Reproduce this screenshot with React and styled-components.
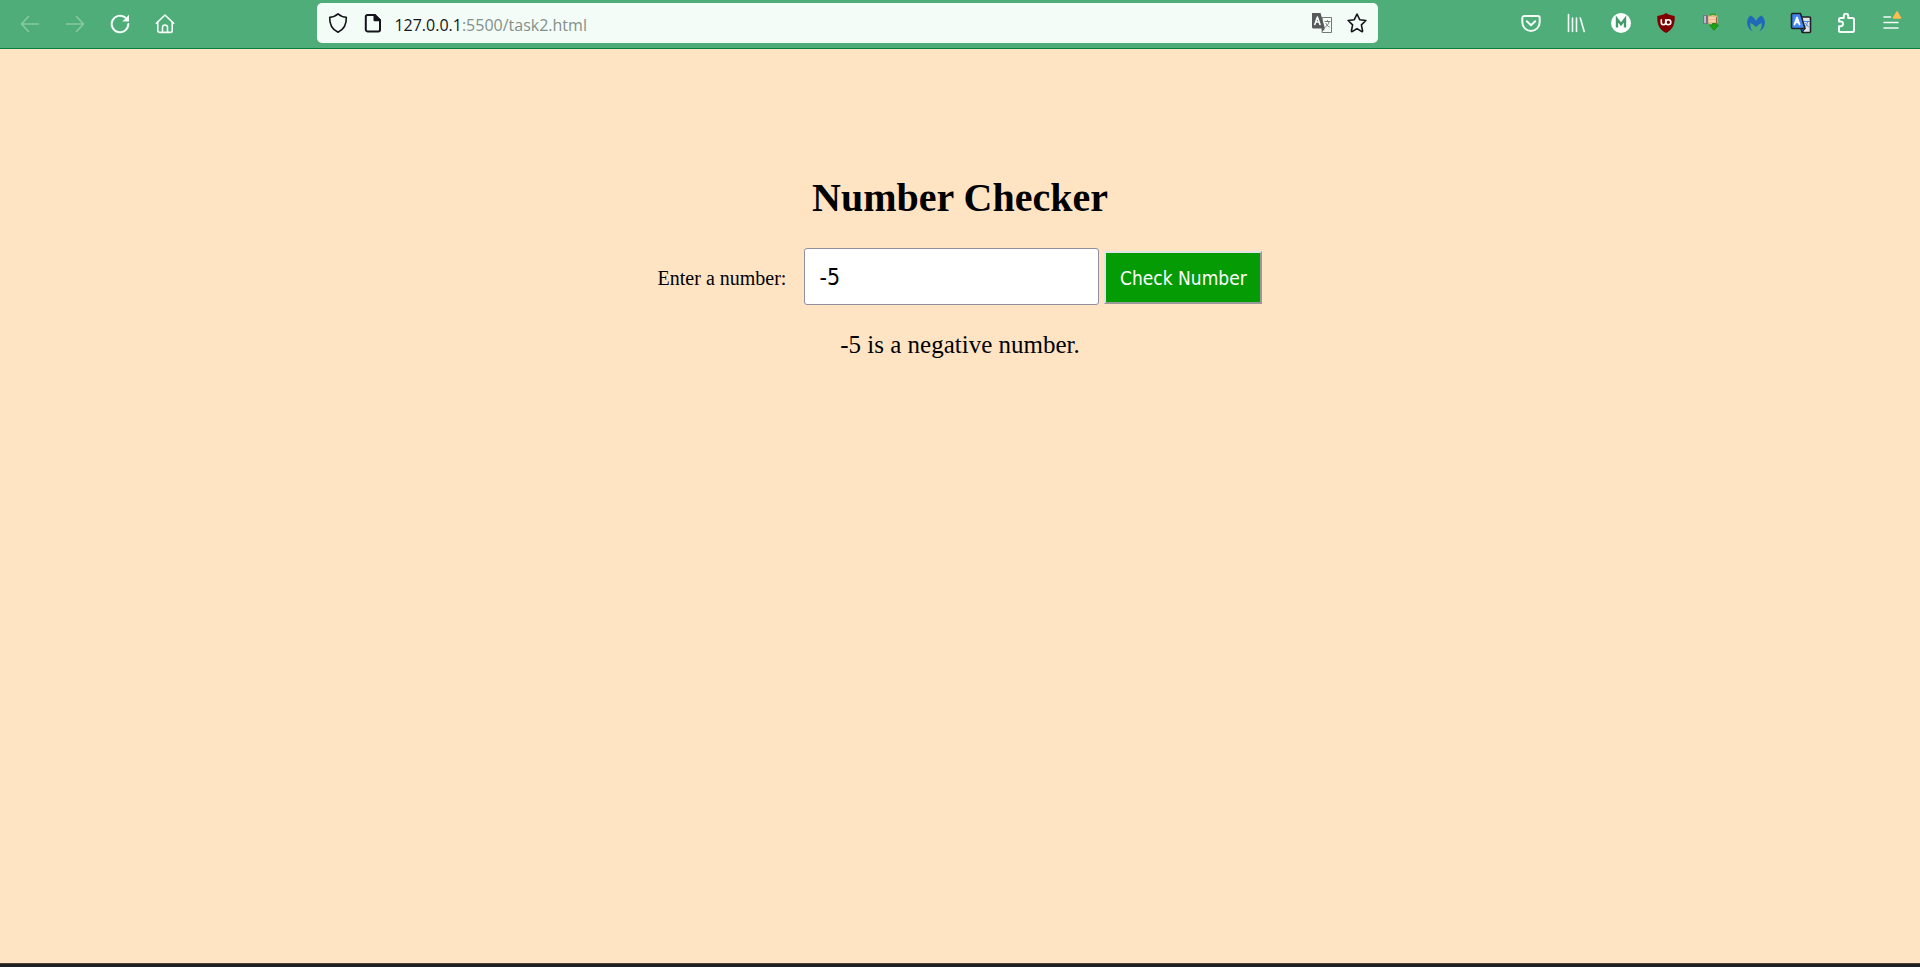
import React, { useState } from "react";
import styled, { createGlobalStyle } from "styled-components";

const GlobalStyle = createGlobalStyle`
  * { box-sizing: border-box; }
  body { margin: 0; }
`;

const Window = styled.div`
  display: flex;
  flex-direction: column;
  min-height: 100vh;
  background: #ffe4c4;
`;

const Toolbar = styled.header`
  display: flex;
  align-items: center;
  padding: 3px 7px 5px;
  background: #4fad79;
  border-bottom: 1px solid #0a8040;
`;

const ButtonGroup = styled.nav`
  display: flex;
  flex: none;
`;

const Spring = styled.div`
  flex: 131 1 0;
`;

const ToolButton = styled.button`
  display: flex;
  align-items: center;
  justify-content: center;
  width: 45px;
  height: 40px;
  padding: ${(p) => (p.$low ? "2px 0 0" : "0")};
  border: 0;
  background: none;
  color: #f3fcf7;
  opacity: ${(p) => (p.disabled ? 0.35 : 1)};
`;

const AddressBar = styled.div`
  display: flex;
  align-items: center;
  flex: 1059 1 0;
  height: 40px;
  padding: 0 3px;
  border-radius: 5px;
  background: #f3fcf7;
`;

const AddressButton = styled(ToolButton)`
  flex: none;
  width: 35px;
  color: #15141a;
`;

const Address = styled.a`
  flex: 1;
  padding: 4px 0 0 4px;
  font: 16px/24px "Open Sans", sans-serif;
  color: #84908a;
  text-decoration: none;
`;

const Host = styled.span`
  color: #15141a;
`;

const Icon = styled.svg.attrs({ width: 24, height: 24, viewBox: "0 0 24 24", "aria-hidden": true })`
  display: block;
  fill: none;
  stroke: currentColor;
  stroke-width: ${(p) => (p.$bold ? 2 : 1.6)};
  stroke-linecap: round;
  stroke-linejoin: round;
`;

const Page = styled.main`
  flex: 1;
  padding: 126px 16px 32px;
  font-family: "Liberation Serif", serif;
  color: #000;
  text-align: center;
`;

const Title = styled.h1`
  margin: 0 0 27px;
  font-size: 40px;
  line-height: 46px;
`;

const Form = styled.form`
  display: flex;
  align-items: baseline;
  justify-content: center;
`;

const Label = styled.label`
  margin-right: 18px;
  font-size: 20px;
`;

const NumberInput = styled.input`
  width: 295px;
  height: 57px;
  margin-right: 5px;
  padding: 0 14px;
  border: 1px solid #8f8f9d;
  border-radius: 3px;
  outline: 0;
  background: #fff;
  color: #000;
  font: 23px "DejaVu Sans Condensed", "DejaVu Sans", sans-serif;
  font-stretch: condensed;
`;

const CheckButton = styled.button`
  width: 158px;
  height: 53px;
  padding: 0;
  border: 2px solid;
  border-color: #e3e3e3 #999 #999 #e3e3e3;
  background: #059b05;
  color: #fff;
  font: 19px "DejaVu Sans Condensed", "DejaVu Sans", sans-serif;
  white-space: nowrap;
`;

const Result = styled.p`
  margin: 25px 0 0;
  font-size: 25px;
  line-height: 29px;
`;

const BottomEdge = styled.footer`
  height: 4px;
  background: #202024;
  border-top: 1px solid #4a4238;
`;

const BackIcon = () => (
  <Icon><path d="M20.5 12H3.500M10.500 4.500L3.500 12l7 7.500" /></Icon>
);
const ForwardIcon = () => (
  <Icon><path d="M3.500 12h17M13.500 4.500l7 7.500-7 7.500" /></Icon>
);
const ReloadIcon = () => (
  <Icon $bold>
    <path d="M20.300 12a8.300 8.300 0 1 1-3-6.400" />
    <path d="M21 2.800v6.700h-6.700z" fill="currentColor" stroke="none" />
  </Icon>
);
const HomeIcon = () => (
  <Icon>
    <path d="M3.300 11.300L12 3l8.700 8.300" />
    <path d="M4.800 10v8.700a1.700 1.700 0 0 0 1.700 1.700h11a1.700 1.700 0 0 0 1.700-1.700V10" />
    <path d="M9.500 20v-4.500a2.500 2.500 0 0 1 5 0V20" />
  </Icon>
);
const ShieldIcon = () => (
  <Icon><path d="M12 2.800c2.500 2.300 5.300 3.300 8.300 3.500.3 6.700-2 12-8.300 15-6.300-3-8.600-8.300-8.300-15 3-.2 5.800-1.200 8.300-3.500z" /></Icon>
);
const FileIcon = () => (
  <Icon $bold>
    <path d="M6.500 4h7.300l5.200 5.200v9.500a1.700 1.700 0 0 1-1.700 1.700H6.500a1.700 1.700 0 0 1-1.700-1.700v-13A1.700 1.700 0 0 1 6.500 4z" />
    <path d="M13.500 4v5.300H19z" fill="currentColor" />
  </Icon>
);
const PageTranslateIcon = () => (
  <Icon>
    <path d="M12.500 6.500h9v15h-9z" fill="#f3fcf7" stroke="#777" strokeWidth="1" />
    <path d="M2 2h8.500l4.500 15.500H3.500A1.500 1.500 0 0 1 2 16z" fill="#56585a" stroke="none" />
    <path d="M12 17.500h3l-2.500 3z" fill="#444" stroke="none" />
    <path d="M4.800 13.500l2.600-7.500 2.600 7.500M5.700 11h3.500" stroke="#f3fcf7" />
    <path d="M15 10.500h5M17.500 9.500v1M19 11c-.6 2.300-1.800 3.800-3.500 5M16 12.500c.6 1.600 1.700 2.700 3.300 3.500" stroke="#777" strokeWidth="1" />
  </Icon>
);
const StarIcon = () => (
  <Icon><path d="M12 3l2.700 5.700 6.200.8-4.500 4.300 1.200 6.200c.1.500-.4.800-.8.600L12 17.600l-4.800 3c-.4.200-.9-.1-.8-.6l1.200-6.200-4.500-4.300 6.200-.8z" /></Icon>
);
const PocketIcon = () => (
  <Icon $bold>
    <path d="M5.300 5h13.400a2 2 0 0 1 2 2v4.200a8.700 8.700 0 0 1-17.400 0V7a2 2 0 0 1 2-2z" />
    <path d="M7.800 10.200l4.200 4 4.200-4" />
  </Icon>
);
const LibraryIcon = () => (
  <Icon><path d="M4.500 3.500v17M8.500 7v13.500M12.500 7v13.500M16.300 7l3.900 13.500" /></Icon>
);
const MIcon = () => (
  <Icon>
    <circle cx="12" cy="12" r="10" fill="#fff" stroke="none" />
    <path d="M8 16.500V8l4 5.200L16 8v8.500" stroke="#439a6c" strokeWidth="2.400" strokeLinejoin="miter" strokeLinecap="butt" />
  </Icon>
);
const BlockerIcon = () => (
  <Icon>
    <path d="M12 2c2.700 1.700 5.500 2.600 8.700 3 .3 7.500-1.300 13.200-8.700 17-7.400-3.800-9-9.500-8.700-17C6.500 4.600 9.300 3.700 12 2z" fill="#800000" stroke="none" />
    <path d="M7.300 8.800v2.700a2.200 2.200 0 0 0 4.400 0V8.800" stroke="#fff" />
    <circle cx="14.300" cy="11.200" r="2.500" stroke="#fff" />
  </Icon>
);
const DownloaderIcon = () => (
  <Icon>
    <rect x="4" y="4" width="5" height="9" rx="1" fill="#77717f" stroke="none" />
    <path d="M6 5.500v6" stroke="#d8c7ea" />
    <rect x="9" y="3.500" width="9.500" height="10" rx="3" fill="#e8b98d" stroke="none" />
    <path d="M11 4c1.500-1 4-1 5.500-.2" stroke="#3ba12d" />
    <path d="M10.500 7h5.500M10.500 10h5.500" stroke="#f8dbb9" />
    <path d="M17.500 6.500v6" stroke="#a3643b" strokeWidth="1" />
    <path d="M11 14h2.500v-1.500h3.500V14h2.500L15.200 19z" fill="#17a80e" stroke="#268216" strokeWidth="1" />
  </Icon>
);
const MalwareIcon = () => (
  <Icon>
    <path d="M6.500 4.500c2.600 1.200 4.300 3 5.500 5.500 1.200-2.500 2.900-4.300 5.500-5.500 2.500 2 3.800 5 3.300 8.200-.4 3.500-2.500 6-5.300 7.500 1.800-2.500 2.700-5.200 2-8.500-1.700 1.200-3.500 2.300-5.500 4.300-2-2-3.800-3.100-5.500-4.300-.7 3.300.2 6 2 8.500-2.800-1.500-4.900-4-5.300-7.500-.5-3.200.8-6.200 3.300-8.200z" fill="#2169b8" stroke="none" />
  </Icon>
);
const TranslateIcon = () => (
  <Icon>
    <path d="M11 6h9.500a1 1 0 0 1 1 1v13.500a1 1 0 0 1-1 1h-7z" fill="#dfe3e8" stroke="#202124" />
    <path d="M3.500 2.500h8l4.500 15H3.500a1 1 0 0 1-1-1v-13a1 1 0 0 1 1-1z" fill="#4285f4" stroke="#202124" />
    <path d="M12 17.500h4l-2.700 3.800z" fill="#174ea6" stroke="#202124" strokeWidth="1" />
    <path d="M5.500 13.500L8 6.500l2.500 7M6.300 11.300h3.400" stroke="#fff" strokeWidth="1.800" />
    <path d="M15.500 10.500h4.800M18.500 11c-.3 2-1.300 3.500-2 4.500M16.500 12.500l3 3.500" stroke="#4285f4" strokeWidth="1" />
  </Icon>
);
const ExtensionIcon = () => (
  <Icon $bold>
    <path d="M5 10.500V8.500A1.500 1.500 0 0 1 6.500 7h3.300V5a2.200 2.200 0 0 1 4.400 0v2h4.300A1.500 1.500 0 0 1 20 8.500V19.500a1.500 1.500 0 0 1-1.500 1.500H6.500A1.500 1.500 0 0 1 5 19.500v-4.300h1.700a2.300 2.300 0 0 0 0-4.700z" />
  </Icon>
);
const MenuIcon = () => (
  <Icon>
    <path d="M5 6h6.500M5 11.500h14M5 17h14" />
    <path d="M18 1l3.400 6h-6.800z" fill="#ffbd4f" stroke="#ffbd4f" />
  </Icon>
);

const navigation = [
  ["Back", BackIcon, true],
  ["Forward", ForwardIcon, true],
  ["Reload", ReloadIcon],
  ["Home", HomeIcon],
];

const extensions = [
  ["Save to Pocket", PocketIcon],
  ["Library", LibraryIcon],
  ["Account", MIcon],
  ["uBlock Origin", BlockerIcon],
  ["Downloader", DownloaderIcon],
  ["Browser Guard", MalwareIcon],
  ["Translate", TranslateIcon],
  ["Extensions", ExtensionIcon],
  ["Menu", MenuIcon],
];

const describe = (value) => {
  const n = Number(value);
  if (value.trim() === "" || Number.isNaN(n)) return "Please enter a number.";
  if (n === 0) return "The number is zero.";
  return `${value} is a ${n < 0 ? "negative" : "positive"} number.`;
};

const ToolButtons = ({ items, label, low }) => (
  <ButtonGroup aria-label={label}>
    {items.map(([name, Glyph, disabled]) => (
      <ToolButton key={name} type="button" aria-label={name} disabled={disabled} $low={low}>
        <Glyph />
      </ToolButton>
    ))}
  </ButtonGroup>
);

export default function App() {
  const [value, setValue] = useState("-5");
  const [result, setResult] = useState(describe("-5"));

  const check = (event) => {
    event.preventDefault();
    setResult(describe(value));
  };

  return (
    <Window>
      <GlobalStyle />
      <Toolbar>
        <ToolButtons items={navigation} label="Navigation" low />
        <Spring />
        <AddressBar>
          <AddressButton type="button" aria-label="Tracking protection"><ShieldIcon /></AddressButton>
          <AddressButton type="button" aria-label="Site information"><FileIcon /></AddressButton>
          <Address href="#"><Host>127.0.0.1</Host>:5500/task2.html</Address>
          <AddressButton type="button" aria-label="Translate page"><PageTranslateIcon /></AddressButton>
          <AddressButton type="button" aria-label="Bookmark"><StarIcon /></AddressButton>
        </AddressBar>
        <Spring />
        <ToolButtons items={extensions} label="Extensions" />
      </Toolbar>
      <Page>
        <Title>Number Checker</Title>
        <Form onSubmit={check}>
          <Label htmlFor="number">Enter a number:</Label>
          <NumberInput id="number" type="text" inputMode="numeric" value={value} onChange={(e) => setValue(e.target.value)} />
          <CheckButton type="submit">Check Number</CheckButton>
        </Form>
        <Result aria-live="polite">{result}</Result>
      </Page>
      <BottomEdge />
    </Window>
  );
}
